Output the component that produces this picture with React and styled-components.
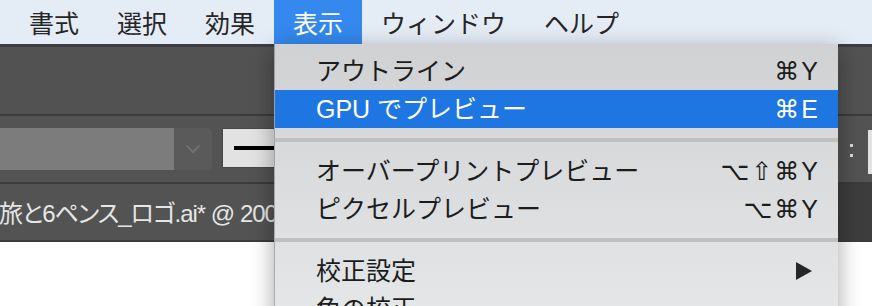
import React from "react";
import styled, { createGlobalStyle } from "styled-components";

const Global = createGlobalStyle`
  html, body { margin: 0; padding: 0; background: #ffffff; }
  body { font-family: "Liberation Sans", "Noto Sans CJK JP", sans-serif; }
`;

const Screen = styled.div`
  position: relative;
  width: 872px;
  height: 306px;
  overflow: hidden;
  display: flex;
  flex-direction: column;
  background: #ffffff;
`;

const MenuBar = styled.div`
  display: flex;
  align-items: stretch;
  height: 44px;
  padding-left: 10px;
  background: #e4ecf6;
  border-bottom: 3px solid #3a3d42;
  flex-shrink: 0;
`;

const MenuTitle = styled.div`
  display: flex;
  align-items: center;
  padding: 0 19px;
  font-family: "Noto Sans CJK JP", sans-serif;
  font-size: 25px;
  line-height: 1;
  color: ${(p) => (p.$active ? "#ffffff" : "#262626")};
  background: ${(p) => (p.$active ? "#3488ee" : "transparent")};
`;

const TopRow = styled.div`
  height: 67px;
  background: #525252;
  flex-shrink: 0;
`;

const Divider = styled.div`
  height: 2px;
  background: #3b3b3b;
  flex-shrink: 0;
`;

const OptionsRow = styled.div`
  height: 66px;
  display: flex;
  align-items: flex-start;
  padding-top: 12px;
  box-sizing: border-box;
  background: #535353;
  flex-shrink: 0;
`;

const Field = styled.div`
  width: 174px;
  height: 42px;
  background: #7c7c7c;
`;

const DropButton = styled.div`
  width: 38px;
  height: 42px;
  background: #5a5a5a;
  border-radius: 0 5px 5px 0;
  display: flex;
  align-items: center;
  justify-content: center;
`;

const StrokeBox = styled.div`
  margin-left: 10px;
  width: 80px;
  height: 38px;
  background: #e2e2e2;
  border: 1px solid #474747;
  display: flex;
  align-items: center;
  padding-left: 11px;
`;

const StrokeLine = styled.div`
  width: 70px;
  height: 4px;
  background: #000000;
`;

const Spacer = styled.div`
  flex: 1;
`;

const Colon = styled.div`
  display: flex;
  flex-direction: column;
  gap: 7px;
  margin-top: 16px;
  margin-right: 15px;
`;

const Dot = styled.div`
  width: 3px;
  height: 3px;
  background: #d8d8d8;
`;

const EdgeBox = styled.div`
  width: 4px;
  height: 44px;
  background: #e2e2e2;
  margin-top: 2px;
`;

const TabBar = styled.div`
  height: 56px;
  display: flex;
  background: #3d3d3d;
  flex-shrink: 0;
`;

const ActiveTab = styled.div`
  width: 274px;
  display: flex;
  align-items: center;
  background: #535353;
  overflow: hidden;
  white-space: nowrap;
`;

const TabTitle = styled.span`
  margin-left: -1px;
  margin-top: 4px;
  font-family: "Liberation Sans", "Noto Sans CJK JP", sans-serif;
  font-feature-settings: "palt" 1;
  font-size: 24px;
  letter-spacing: -1px;
  line-height: 1;
  color: #e6e6e6;
`;

const TabRest = styled.div`
  flex: 1;
  background: #3d3d3d;
`;

const Canvas = styled.div`
  flex: 1;
  background: #ffffff;
`;

const Dropdown = styled.div`
  position: absolute;
  top: 44px;
  left: 274px;
  width: 564px;
  height: 290px;
  padding-top: 8px;
  box-sizing: border-box;
  background: linear-gradient(#cfd1d3, #e6e8ea);
  border-left: 1px solid rgba(0, 0, 0, 0.25);
  box-shadow: 0 6px 22px rgba(0, 0, 0, 0.35);
  display: flex;
  flex-direction: column;
`;

const Item = styled.div`
  height: 38px;
  display: flex;
  align-items: center;
  justify-content: space-between;
  padding: 0 20px 0 41px;
  background: ${(p) => (p.$selected ? "#1e76e2" : "transparent")};
  color: ${(p) => (p.$selected ? "#ffffff" : "#1c1c1c")};
  flex-shrink: 0;
`;

const Label = styled.span`
  font-family: "Liberation Sans", "Noto Sans CJK JP", sans-serif;
  font-size: 25px;
  line-height: 1;
`;

const Shortcut = styled.span`
  display: flex;
  align-items: center;
  gap: 2px;
  font-family: "Liberation Sans", "DejaVu Sans", sans-serif;
  font-size: 25px;
  line-height: 1;
`;

const Sym = styled.span`
  font-family: "DejaVu Sans", sans-serif;
  font-size: 25px;
  line-height: 1;
`;

const Separator = styled.div`
  height: 24px;
  display: flex;
  align-items: center;
  flex-shrink: 0;
  &::before {
    content: "";
    flex: 1;
    height: 4px;
    background: #bec0c2;
  }
`;

const SubmenuMark = styled.span`
  display: flex;
  margin-right: 5px;
`;

const Chevron = () => (
  <svg width="16" height="10" viewBox="0 0 16 10">
    <path d="M1.5 1.5 L8 8 L14.5 1.5" fill="none" stroke="#707070" strokeWidth="2" />
  </svg>
);

const Arrow = () => (
  <SubmenuMark>
    <svg width="18" height="20" viewBox="0 0 18 20">
      <polygon points="1,1 17,10 1,19" fill="#262626" />
    </svg>
  </SubmenuMark>
);

const Keys = ({ syms, keyChar }) => (
  <Shortcut>
    {syms.map((s, i) => (
      <Sym key={i}>{s}</Sym>
    ))}
    <span>{keyChar}</span>
  </Shortcut>
);

const menuTitles = ["書式", "選択", "効果", "表示", "ウィンドウ", "ヘルプ"];

export default function App() {
  return (
    <>
      <Global />
      <Screen>
        <MenuBar>
          {menuTitles.map((t) => (
            <MenuTitle key={t} $active={t === "表示"}>
              {t}
            </MenuTitle>
          ))}
        </MenuBar>
        <TopRow />
        <Divider />
        <OptionsRow>
          <Field />
          <DropButton>
            <Chevron />
          </DropButton>
          <StrokeBox>
            <StrokeLine />
          </StrokeBox>
          <Spacer />
          <Colon>
            <Dot />
            <Dot />
          </Colon>
          <EdgeBox />
        </OptionsRow>
        <Divider />
        <TabBar>
          <ActiveTab>
            <TabTitle>旅と6ペンス_ロゴ.ai* @ 200</TabTitle>
          </ActiveTab>
          <TabRest />
        </TabBar>
        <Divider />
        <Canvas />
        <Dropdown>
          <Item>
            <Label>アウトライン</Label>
            <Keys syms={["⌘"]} keyChar="Y" />
          </Item>
          <Item $selected>
            <Label>GPU でプレビュー</Label>
            <Keys syms={["⌘"]} keyChar="E" />
          </Item>
          <Separator />
          <Item>
            <Label>オーバープリントプレビュー</Label>
            <Keys syms={["⌥", "⇧", "⌘"]} keyChar="Y" />
          </Item>
          <Item>
            <Label>ピクセルプレビュー</Label>
            <Keys syms={["⌥", "⌘"]} keyChar="Y" />
          </Item>
          <Separator />
          <Item>
            <Label>校正設定</Label>
            <Arrow />
          </Item>
          <Item>
            <Label>色の校正</Label>
          </Item>
        </Dropdown>
      </Screen>
    </>
  );
}
